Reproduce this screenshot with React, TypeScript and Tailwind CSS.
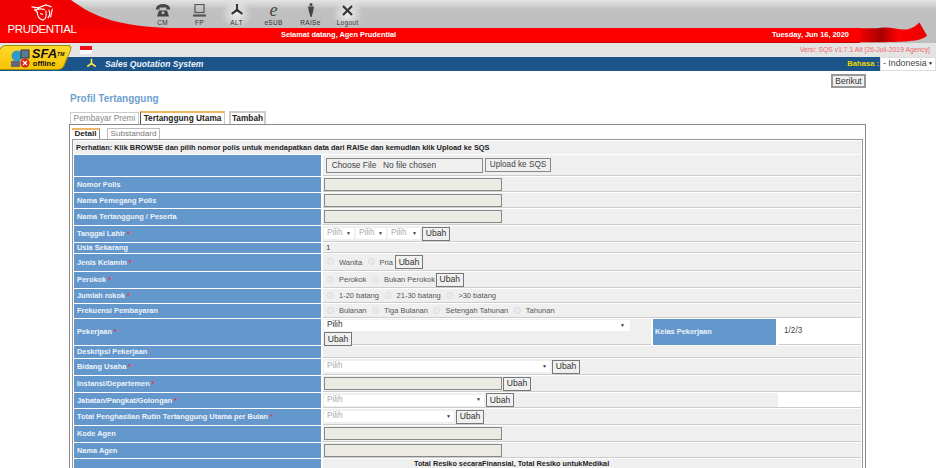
import type { ReactNode } from 'react';

// ─── Small form controls ─────────────────────────────────────────────────────
function Ubah({ className = '' }: { className?: string }) {
  return (
    <div className={`flex h-[14px] w-[28px] shrink-0 items-center justify-center border border-[#777] bg-[#f0f0f0] text-[8.600px] text-[#333] ${className}`}>
      Ubah
    </div>
  );
}

function TextBox({ w = 'w-[178px]' }: { w?: string }) {
  return <div className={`h-[13px] ${w} shrink-0 border border-[#888] bg-[#ebebe4]`} />;
}

function Pilih({ w, dark = false }: { w: string; dark?: boolean }) {
  return (
    <div className={`flex h-[11px] ${w} shrink-0 items-center justify-between rounded-[1px] bg-white pl-[3px] pr-[3px] text-[8.200px] ${dark ? 'text-[#333]' : 'text-[#aaa]'}`}>
      <span>Pilih</span>
      <span className="text-[5px] text-[#333]">▼</span>
    </div>
  );
}

function Radios({ items }: { items: [string, number][] }) {
  return (
    <div className="flex items-center pl-[3px] pt-[1px] text-[7.500px] text-[#555]">
      {items.map(([label, gap]) => (
        <div key={label} className="flex items-center" style={{ marginRight: gap }}>
          <div className="mb-[2px] mr-[5px] h-[7px] w-[7px] rounded-full border border-[#ddd] bg-[#eaeaea]" />
          <span className="whitespace-nowrap">{label}</span>
        </div>
      ))}
    </div>
  );
}

function Row({ label, h, req = false, children }: { label?: string; h: string; req?: boolean; children?: ReactNode }) {
  return (
    <div className={`flex ${h} shrink-0 gap-[2px]`}>
      <div className="flex w-[247px] shrink-0 items-center bg-[#6498cd] pl-[3px] text-[7.400px] font-bold text-[#eef3fa]">
        {label}
        {req && <span className="ml-[2px] text-[#e33]">*</span>}
      </div>
      <div className="flex min-w-0 flex-1 items-center gap-[2px] border-b border-[#ccc] bg-[#efefef] pl-[1px]">{children}</div>
    </div>
  );
}

// ─── Drawn icons ──────────────────────────────────────────────────────────────
const Fan = ({ size = 16, color = '#333' }: { size?: number; color?: string }) => (
  <svg width={size} height={size} viewBox="0 0 16 16" fill={color}>
    <path d="M6.8 1h2.4l-.2 6.2 5.8 4.2-1.3 1.9L8 9.6l-5.5 3.7-1.3-1.9L7 7.2z" />
    <circle cx="8" cy="8" r="1.6" />
  </svg>
);

const nav: { label: string; icon: ReactNode; glow?: boolean }[] = [
  {
    label: 'CM',
    icon: (
      <svg width="14" height="13" viewBox="0 0 14 13" fill="#444">
        <path d="M0 4C1 1 4 0 7 0s6 1 7 4v1.500h-3.500V3.500h-7v2H0z" />
        <path d="M3 6.500h8L13 12.500H1z" />
        <circle cx="7" cy="8.800" r="1.500" fill="#bbb" />
      </svg>
    ),
  },
  {
    label: 'FP',
    icon: (
      <svg width="13" height="13" viewBox="0 0 13 13" fill="none" stroke="#555">
        <rect x="2" y="0.500" width="9" height="8" strokeWidth="1.200" />
        <path d="M0 11.500h13" strokeWidth="2.200" />
      </svg>
    ),
  },
  { label: 'ALT', glow: true, icon: <Fan size={14} /> },
  { label: 'eSUB', icon: <span className="font-['Liberation_Serif',serif] text-[18px] italic leading-[13px] text-[#444]">e</span> },
  {
    label: 'RAISe',
    icon: (
      <svg width="8" height="14" viewBox="0 0 8 14" fill="#444">
        <circle cx="4" cy="1.500" r="1.500" />
        <path d="M1 3.500h6L6 9 4.500 14h-1L2 9z" />
      </svg>
    ),
  },
  {
    label: 'Logout',
    glow: true,
    icon: (
      <svg width="11" height="11" viewBox="0 0 11 11" stroke="#333" strokeWidth="2.200">
        <path d="M1 1l9 9M10 1l-9 9" />
      </svg>
    ),
  },
];

// ─── Header ───────────────────────────────────────────────────────────────────
function Header() {
  return (
    <div className="relative">
      <div className="relative h-[43px] bg-[linear-gradient(#e4e4e4,#c0c0c0_22%,#bebebe)]">
        {/* red swoosh behind the logo */}
        <svg className="absolute left-0 top-0" width="200" height="30" viewBox="0 0 200 30">
          <path d="M0 0h71C88 12 108 26 170 28v2H0z" fill="#f00000" />
        </svg>
        {/* ribbon end on the right */}
        <svg className="absolute right-[8px] top-[21px]" width="72" height="22" viewBox="0 0 76 22">
          <defs>
            <linearGradient id="rib" x1="0" x2="1" y1="0" y2="0">
              <stop offset="0" stopColor="#f00" />
              <stop offset="0.35" stopColor="#a80000" />
              <stop offset="0.6" stopColor="#f00" />
              <stop offset="1" stopColor="#e80000" />
            </linearGradient>
          </defs>
          <path d="M0 7h22c14-3 24 3 33 1 5-1 9-4 12-7l8 14C68 20 64 22 0 22z" fill="url(#rib)" />
        </svg>
        <div className="absolute bottom-0 left-0 right-[76px] flex h-[15px] items-center whitespace-nowrap border-b border-[#c40000] bg-[linear-gradient(#ff0000,#f80000)] pl-[281px] text-[7.400px] font-bold text-white">
          <span className="w-[491px] shrink-0">Selamat datang, Agen Prudential</span>
          <span className="shrink-0">Tuesday, Jun 16, 2020</span>
        </div>
        <div className="absolute left-[8px] top-[4px] flex w-[68px] flex-col items-center">
          <svg width="28" height="19" viewBox="0 0 28 20" fill="none" stroke="#fff" strokeWidth="1.200">
            <path d="M3 3l7 1 8-3 6 2M6 7c3-2 8-2 11-1M9 8c0 4 2 8 6 9 3-1 4-5 3-10M21 6c2 3 1 7-1 9M25 5l-2 9M12 10l3 1M6 5l3 4" />
          </svg>
          <span className="mt-px text-[11.500px] leading-[11px] tracking-[-0.4px] text-white">PRUDENTIAL</span>
        </div>
        <div className="absolute left-[144px] top-[1px] flex">
          {nav.map((n) => (
            <div key={n.label} className={`flex h-[25px] w-[37px] flex-col items-center justify-end ${n.glow ? 'bg-[radial-gradient(circle,#ececec,#bfbfbf00_70%)]' : ''}`}>
              <div className="flex h-[14px] items-center">{n.icon}</div>
              <span className="mt-[2px] text-[6.500px] leading-[7px] tracking-[0.3px] text-[#333]">{n.label}</span>
            </div>
          ))}
        </div>
      </div>

      <div className="flex h-[14px] items-center justify-between bg-[#e4e4e4] pl-[80px] pr-[6px]">
        <div className="flex h-[8px] w-[12px] flex-col">
          <div className="h-1/2 bg-[#e8141c]" />
          <div className="h-1/2 bg-white" />
        </div>
        <span className="text-[6.800px] text-[#ee6a6a]">Versi: SQS v1.7.1 Alt [26-Juli-2019 Agency]</span>
      </div>

      <div className="flex h-[14px] items-center justify-between bg-[#1a5488] pl-[86px]">
        <div className="flex items-center gap-[8px]">
          <Fan size={11} color="#ffe34d" />
          <span className="text-[8.600px] font-bold italic text-[#eef3fa]">Sales Quotation System</span>
        </div>
        <div className="flex items-center gap-[1px]">
          <span className="text-[7.600px] font-bold text-[#e8d800]">Bahasa :</span>
          <div className="flex h-[14px] w-[56px] items-center justify-between border border-[#ddd] bg-white pl-[2px] pr-[2px] text-[8.800px] text-[#444]">
            <span>- Indonesia</span>
            <span className="text-[5px] text-[#222]">▼</span>
          </div>
        </div>
      </div>

      {/* SFA badge */}
      <div className="absolute left-[-4px] top-[45px] flex h-[25px] w-[72px] -skew-x-[22deg] items-center justify-end rounded-[5px] border border-[#a88c00] bg-[linear-gradient(#ffd92e,#f5c400)] pr-[2px]">
        <div className="skew-x-[22deg] text-center leading-none text-[#111]">
          <div className="text-[13px] font-bold italic leading-[12px]">
            SFA<sup className="text-[5px]">TM</sup>
          </div>
          <div className="mr-[8px] text-[7.500px] font-bold leading-[8px]">offline</div>
        </div>
      </div>
      <svg className="absolute left-[10px] top-[49px]" width="21" height="20" viewBox="0 0 21 20">
        <circle cx="7" cy="7" r="5.500" fill="#2f9ac8" />
        <rect x="11" y="1" width="8" height="8" fill="#5a7d96" stroke="#334" />
        <rect x="1" y="12" width="9" height="6" fill="#667" />
        <circle cx="15" cy="14" r="4.500" fill="#d8201c" />
        <path d="M13 12l4 4M17 12l-4 4" stroke="#fff" strokeWidth="1.200" />
      </svg>
    </div>
  );
}

// ─── Page ─────────────────────────────────────────────────────────────────────
export default function App() {
  return (
    <div className="h-[468px] w-[936px] overflow-hidden bg-white font-['Liberation_Sans',Arial,sans-serif]">
      <Header />

      <div className="ml-[69px] w-[797px]">
        <div className="flex justify-end pt-[3px]">
          <div className="flex h-[14px] w-[35px] items-center justify-center border-2 border-[#999] bg-[#f0f0f0] text-[8.500px] text-[#333]">Berikut</div>
        </div>

        <h1 className="ml-px mt-[5px] text-[10px] font-bold leading-[12px] text-[#6f9fd0]">Profil Tertanggung</h1>

        {/* Top tabs */}
        <div className="ml-[1px] mt-[6px] flex h-[13px] items-end gap-px text-[8.300px]">
          <div className="flex h-[12px] w-[69px] items-center justify-center border border-b-0 border-[#ccc] text-[#888]">Pembayar Premi</div>
          <div className="flex h-[13px] w-[85px] items-center justify-center border-t-2 border-r border-l border-t-[#f2b560] border-r-[#ccc] border-l-[#555] font-bold text-[#222]">Tertanggung Utama</div>
          <div className="ml-[3px] flex h-[13px] w-[37px] items-center justify-center border-2 border-b-0 border-[#ccc] font-bold text-[#222]">Tambah</div>
        </div>

        <div className="h-[400px] border border-[#888] px-[2px]">
          {/* Inner tabs */}
          <div className="flex h-[14px] items-end gap-[7px] text-[8.100px]">
            <div className="flex h-[11px] w-[28px] items-center justify-center border-t-2 border-r border-t-[#f2b560] border-r-[#888] font-bold text-[#222]">Detail</div>
            <div className="flex h-[11px] w-[53px] items-center justify-center border border-b-0 border-[#bbb] text-[#777]">Substandard</div>
          </div>

          <div className="flex h-[400px] flex-col gap-[1px] border border-[#999] p-[1px]">
            <div className="flex h-[13px] shrink-0 items-center bg-[#efefef] pl-[2px] text-[7.400px] font-bold text-[#222]">
              Perhatian: Klik BROWSE dan pilih nomor polis untuk mendapatkan data dari RAISe dan kemudian klik Upload ke SQS
            </div>

            <Row h="h-[21px]">
              <div className="ml-[2px] flex h-[15px] w-[157px] shrink-0 items-center border border-[#888] text-[8.400px] text-[#444]">
                <div className="flex h-full w-[54px] items-center justify-center bg-[#efefef]">Choose File</div>
                <span className="pl-[2px]">No file chosen</span>
              </div>
              <div className="flex h-[14px] w-[66px] shrink-0 items-center justify-center border border-[#888] text-[8.200px] text-[#444]">Upload ke SQS</div>
            </Row>
            <Row label="Nomor Polis" h="h-[15px]"><TextBox /></Row>
            <Row label="Nama Pemegang Polis" h="h-[15px]"><TextBox /></Row>
            <Row label="Nama Tertanggung / Peserta" h="h-[16px]"><TextBox /></Row>
            <Row label="Tanggal Lahir" req h="h-[16px]">
              <Pilih w="w-[30px]" />
              <Pilih w="w-[30px]" />
              <Pilih w="w-[32px]" />
              <Ubah />
            </Row>
            <Row label="Usia Sekarang" h="h-[10px]"><span className="pl-[2px] text-[8px] text-[#444]">1</span></Row>
            <Row label="Jenis Kelamin" req h="h-[17px]">
              <Radios items={[['Wanita', 5.5], ['Pria', 2]]} />
              <Ubah className="-ml-[2px]" />
            </Row>
            <Row label="Perokok" req h="h-[16px]">
              <Radios items={[['Perokok', 5.5], ['Bukan Perokok', 1]]} />
              <Ubah className="-ml-[2px]" />
            </Row>
            <Row label="Jumlah rokok" req h="h-[14px]">
              <Radios items={[['1-20 batang', 5.5], ['21-30 batang', 5.5], ['>30 batang', 0]]} />
            </Row>
            <Row label="Frekuensi Pembayaran" h="h-[14px]">
              <Radios items={[['Bulanan', 5.5], ['Tiga Bulanan', 5.5], ['Setengah Tahunan', 5.5], ['Tahunan', 0]]} />
            </Row>

            {/* Pekerjaan has an extra pair of cells on the right */}
            <div className="flex h-[26px] shrink-0 gap-[2px]">
              <div className="flex w-[247px] shrink-0 items-center bg-[#6498cd] pl-[3px] text-[7.400px] font-bold text-[#eef3fa]">
                Pekerjaan<span className="ml-[2px] text-[#e33]">*</span>
              </div>
              <div className="flex w-[328px] shrink-0 flex-col items-start gap-[1px] border-b border-[#ccc] bg-[#efefef] pl-[1px] pt-[1px]">
                <div className="flex h-[11px] w-[306px] items-center justify-between bg-white pl-[3px] pr-[5px] text-[8.200px] text-[#333]">
                  <span>Pilih</span>
                  <span className="text-[5px]">▼</span>
                </div>
                <Ubah />
              </div>
              <div className="flex w-[123px] shrink-0 items-center bg-[#6498cd] pl-[2px] text-[7.400px] font-bold text-[#eef3fa]">Kelas Pekerjaan</div>
              <div className="flex flex-1 items-center border-b border-[#ccc] bg-white pl-[6px] text-[8.200px] text-[#444]">1/2/3</div>
            </div>

            <Row label="Deskripsi Pekerjaan" h="h-[12px]" />
            <Row label="Bidang Usaha" req h="h-[16px]">
              <Pilih w="w-[226px]" />
              <Ubah />
            </Row>
            <Row label="Instansi/Departemen" req h="h-[16px]">
              <TextBox />
              <Ubah className="-ml-px" />
            </Row>
            <Row label="Jabatan/Pangkat/Golongan" req h="h-[15px]">
              <Pilih w="w-[160px]" />
              <Ubah />
              <div className="ml-auto h-full w-[83px] bg-white" />
            </Row>
            <Row label="Total Penghasilan Rutin Tertanggung Utama per Bulan" req h="h-[16px]">
              <Pilih w="w-[130px]" />
              <Ubah />
            </Row>
            <Row label="Kode Agen" h="h-[16px]"><TextBox /></Row>
            <Row label="Nama Agen" h="h-[15px]"><TextBox /></Row>
            <Row h="h-[20px]">
              <div className="flex h-full items-start pl-[90px] text-[7.300px] font-bold text-[#222]">Total Resiko secaraFinansial, Total Resiko untukMedikal</div>
            </Row>
          </div>
        </div>
      </div>
    </div>
  );
}
